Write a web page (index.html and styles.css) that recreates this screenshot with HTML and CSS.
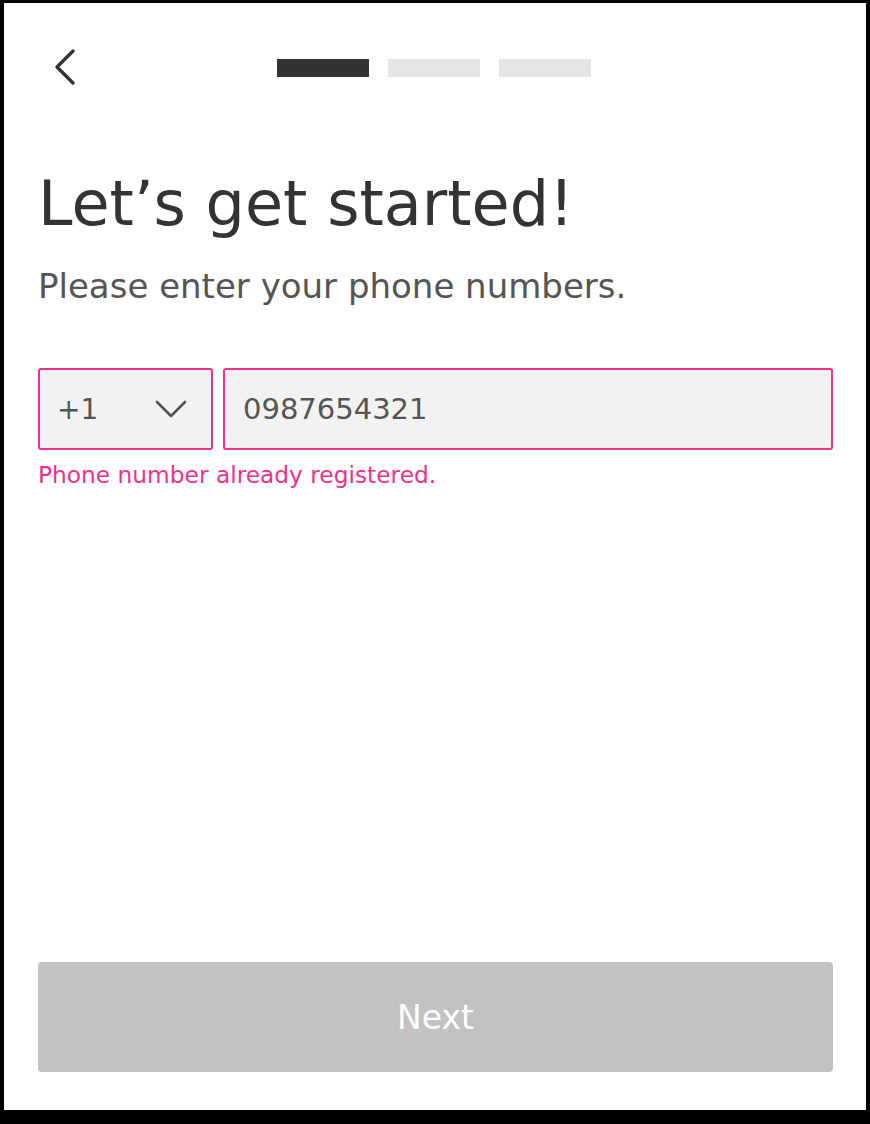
FILE: index.html
```html
<!DOCTYPE html>
<html lang="en">
<head>
  <meta charset="UTF-8">
  <meta name="viewport" content="width=device-width, initial-scale=1.0">
  <title>Sign up - Phone number</title>
  <link rel="stylesheet" href="styles.css">
</head>
<body>

  <div class="screen">
    <!-- Top bar: back + step progress -->
    <div class="top-bar">
      <button class="back-btn" aria-label="Back">
        <svg width="26" height="40" viewBox="0 0 26 40">
          <polyline points="21,3 5,19 21,35" fill="none" stroke="#333" stroke-width="3.4" stroke-linecap="round" stroke-linejoin="round"/>
        </svg>
      </button>
      <div class="steps">
        <span class="step active"></span>
        <span class="step"></span>
        <span class="step"></span>
      </div>
    </div>

    <h1>Let’s get started!</h1>
    <p class="subtitle">Please enter your phone numbers.</p>

    <!-- Phone form -->
    <div class="phone-row">
      <div class="field country error">
        <span>+1</span>
        <svg width="34" height="20" viewBox="0 0 34 20">
          <polyline points="3,3 17,17 31,3" fill="none" stroke="#555" stroke-width="2.6" stroke-linecap="round" stroke-linejoin="round"/>
        </svg>
      </div>
      <div class="field number error">
        <span>0987654321</span>
      </div>
    </div>
    <p class="error-text">Phone number already registered.</p>

    <div class="spacer"></div>

    <button class="next-btn" disabled>Next</button>
  </div>

</body>
</html>
```

FILE: styles.css
```css
html {
  background-color: #000;
}
body {
  margin: 0;
  padding: 3px 4px 14px 4px;
  font-family: 'DejaVu Sans', sans-serif;
  color: #333;
}
.screen {
  background-color: #fff;
  height: 1107px;
  box-sizing: border-box;
  padding: 0 33px 38px 34px;
  display: flex;
  flex-direction: column;
}
.top-bar {
  display: flex;
  align-items: center;
  height: 130px;
}
.back-btn {
  background: none;
  border: none;
  padding: 0;
  margin-left: 14px;
  margin-top: -1px;
  display: flex;
  cursor: pointer;
}
.steps {
  display: flex;
  gap: 19px;
  margin-left: 199px;
}
.step {
  display: block;
  width: 92px;
  height: 18px;
  background-color: #e5e5e5;
}
.step.active {
  background-color: #333;
}
h1 {
  margin: 40px 0 0 0;
  font-size: 62px;
  font-weight: normal;
  line-height: 1;
  color: #333;
}
.subtitle {
  margin: 34px 0 0 0;
  font-size: 34px;
  line-height: 1;
  color: #555;
}
.phone-row {
  display: flex;
  gap: 10px;
  margin-top: 65px;
}
.field {
  height: 82px;
  box-sizing: border-box;
  background-color: #f2f2f2;
  border: 2px solid #ccc;
  border-radius: 3px;
  display: flex;
  align-items: center;
  font-size: 28px;
  color: #555;
}
.field.error {
  border-color: #f0308c;
}
.country {
  width: 175px;
  padding: 0 23px 0 17px;
  justify-content: space-between;
}
.number {
  flex: 1;
  padding: 0 18px;
  font-size: 29px;
}
.error-text {
  margin: 11px 0 0 0;
  font-size: 23.3px;
  color: #f0308c;
}
.spacer {
  flex: 1;
}
.next-btn {
  height: 110px;
  border: none;
  border-radius: 4px;
  background-color: #c2c2c2;
  color: #fff;
  font-family: 'DejaVu Sans', sans-serif;
  font-size: 33px;
}
```
